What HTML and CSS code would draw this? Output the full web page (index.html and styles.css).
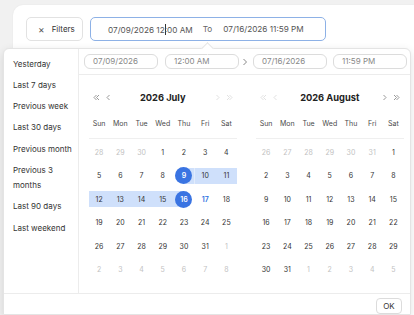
FILE: index.html
```html
<!DOCTYPE html>
<html lang="en">
<head>
<meta charset="UTF-8">
<meta name="viewport" content="width=device-width, initial-scale=1.0">
<link rel="stylesheet" href="styles.css">
<title>Date range</title>
</head>
<body>
<div class="card">
    <div class="toolbar">
        <button class="filters-btn" type="button"><span class="x">&times;</span>Filters</button>
        <div class="range-input">
            <span class="val">07/09/2026 12<span class="caret"></span>:00 AM</span>
            <span class="to">To</span>
            <span class="val">07/16/2026 11:59 PM</span>
        </div>
    </div>
</div>

<div class="popup">
    <div class="popup-body">
        <ul class="presets">
            <li>Yesterday</li>
            <li>Last 7 days</li>
            <li>Previous week</li>
            <li>Last 30 days</li>
            <li>Previous month</li>
            <li>Previous 3 months</li>
            <li>Last 90 days</li>
            <li>Last weekend</li>
        </ul>
        <div class="panels">
            <div class="inputs">
                <div class="field">07/09/2026</div>
                <div class="field">12:00 AM</div>
                <svg class="sep" width="14" height="8" viewBox="0 0 14 8"><path d="M4.5 1 L7.5 4 L4.5 7" fill="none" stroke="#888" stroke-width="1"/></svg>
                <div class="field">07/16/2026</div>
                <div class="field">11:59 PM</div>
            </div>
            <div class="calendars">
                <div class="cal" id="cal-left"></div>
                <div class="cal" id="cal-right"></div>
            </div>
        </div>
    </div>
    <div class="popup-foot">
        <button class="ok-btn" type="button">OK</button>
    </div>
</div>

<script>
    const weekdays = ['Sun', 'Mon', 'Tue', 'Wed', 'Thu', 'Fri', 'Sat'];
    const dbl = '<svg width="7" height="7" viewBox="0 0 7 7"><path d="M3.5 1 L1 3.5 L3.5 6 M6 1 L3.5 3.5 L6 6" fill="none" stroke="currentColor" stroke-width="1"/></svg>';
    const one = '<svg width="7" height="7" viewBox="0 0 7 7"><path d="M4.5 1 L2 3.5 L4.5 6" fill="none" stroke="currentColor" stroke-width="1"/></svg>';

    function buildCalendar(el, title, year, month, leftNav, rightNav) {
        let html = '<div class="cal-head">';
        html += '<span class="nav outer ' + (leftNav ? '' : 'off') + '">' + dbl + '</span>';
        html += '<span class="nav inner ' + (leftNav ? '' : 'off') + '">' + one + '</span>';
        html += '<span class="title">' + title + '</span>';
        html += '<span class="nav inner flip ' + (rightNav ? '' : 'off') + '">' + one + '</span>';
        html += '<span class="nav outer flip ' + (rightNav ? '' : 'off') + '">' + dbl + '</span>';
        html += '</div><div class="grid">';
        weekdays.forEach(function (w) { html += '<div class="wd">' + w + '</div>'; });

        const first = new Date(year, month, 1).getDay();
        const start = new Date(year, month, 1 - first);
        for (let i = 0; i < 42; i++) {
            const d = new Date(start.getFullYear(), start.getMonth(), start.getDate() + i);
            const inMonth = d.getMonth() === month;
            let cls = 'day';
            if (!inMonth) cls += ' muted';
            if (inMonth && month === 6) {
                const n = d.getDate();
                if (n === 9) cls += ' start';
                else if (n === 16) cls += ' end';
                else if (n > 9 && n < 16) cls += ' range';
                else if (n === 17) cls += ' today';
            }
            html += '<div class="' + cls + '"><span>' + d.getDate() + '</span></div>';
        }
        html += '</div>';
        el.innerHTML = html;
    }

    buildCalendar(document.getElementById('cal-left'), '2026 July', 2026, 6, true, false);
    buildCalendar(document.getElementById('cal-right'), '2026 August', 2026, 7, false, true);
</script>
</body>
</html>
```

FILE: styles.css
```css
* {
    box-sizing: border-box;
}

body {
    margin: 0;
    width: 414px;
    height: 315px;
    overflow: hidden;
    position: relative;
    background-color: #f1f1f1;
    font-family: Inter, "Noto Sans", sans-serif;
    color: #333;
}

.card {
    margin: 5px 0 0 13px;
    height: 310px;
    padding: 12px 0 0 13px;
    background-color: #fff;
    border-radius: 10px 0 0 0;
    box-shadow: 0 0 2px rgba(0, 0, 0, 0.06);
}

.toolbar {
    display: flex;
    gap: 7px;
}

.filters-btn {
    display: flex;
    align-items: center;
    gap: 7px;
    width: 57px;
    height: 24px;
    padding: 0 0 0 11px;
    border: 1px solid #e2e2e2;
    border-radius: 5px;
    background-color: #fff;
    font-family: Inter, sans-serif;
    font-size: 8px;
    color: #333;
}

.filters-btn .x {
    font-size: 10px;
    color: #555;
}

.range-input {
    display: flex;
    align-items: center;
    width: 236px;
    height: 24px;
    padding-left: 17px;
    border: 1px solid #8db1e6;
    border-radius: 5px;
    font-size: 8.2px;
    color: #555;
}

.range-input .to {
    margin: 0 11px 0 10px;
    color: #666;
}

.caret {
    display: inline-block;
    width: 0;
    height: 11px;
    border-left: 1px solid #333;
    vertical-align: -2px;
    margin-right: -1px;
}

/* dropdown */

.popup {
    position: absolute;
    left: 3px;
    top: 48px;
    width: 408px;
    height: 267px;
    display: flex;
    flex-direction: column;
    background-color: #fff;
    border: 1px solid #e4e4e4;
    border-radius: 6px 6px 0 0;
    box-shadow: 0 3px 10px rgba(0, 0, 0, 0.12);
}

.popup::before {
    content: "";
    position: absolute;
    left: 199px;
    top: -5px;
    width: 8px;
    height: 8px;
    background-color: #fff;
    border-left: 1px solid #e4e4e4;
    border-top: 1px solid #e4e4e4;
    transform: rotate(45deg);
}

.popup-body {
    display: flex;
    height: 244px;
}

.presets {
    flex-shrink: 0;
    width: 75px;
    margin: 0;
    padding: 4.5px 4px 0 9px;
    list-style: none;
    border-right: 1px solid #ececec;
    font-size: 8px;
    color: #333;
}

.presets li {
    padding: 3.15px 0;
    line-height: 15px;
}

.panels {
    flex: 1;
    min-width: 0;
}

.inputs {
    display: flex;
    align-items: center;
    height: 26px;
    padding: 0 0 0 5px;
    border-bottom: 1px solid #ececec;
}

.field {
    flex-shrink: 0;
    width: 74px;
    height: 15px;
    margin-right: 7px;
    padding-left: 8px;
    border: 1px solid #dcdcdc;
    border-radius: 6px;
    font-size: 8px;
    line-height: 13px;
    color: #888;
}

.field:nth-of-type(2),
.field:nth-of-type(4) {
    margin-right: 0;
}

.field:nth-of-type(3) {
    margin-right: 6px;
}

.sep {
    flex-shrink: 0;
}

.calendars {
    display: flex;
    gap: 18.5px;
    padding: 10px 0 0 9.5px;
}

.cal {
    flex-shrink: 0;
    width: 148.5px;
}

.cal-head {
    display: flex;
    align-items: center;
    height: 24px;
}

.nav {
    display: flex;
    justify-content: center;
    color: #999;
}

.nav.outer {
    width: 15px;
}

.nav.inner {
    width: 9px;
}

.nav.flip svg {
    transform: scaleX(-1);
}

.nav.off {
    color: #e2e2e2;
}

.title {
    flex: 1;
    text-align: center;
    font-size: 9.3px;
    font-weight: 700;
    color: #222;
}

.grid {
    display: grid;
    grid-template-columns: repeat(7, 1fr);
    grid-template-rows: 31.5px;
    grid-auto-rows: 23.5px;
}

.wd {
    height: 30px;
    line-height: 29px;
    text-align: center;
    font-size: 7px;
    color: #4a4a4a;
    border-bottom: 1px solid #efefef;
}

.day {
    display: flex;
    align-items: center;
    justify-content: center;
    font-size: 7px;
    color: #333;
}

.day span {
    display: flex;
    align-items: center;
    justify-content: center;
    width: 100%;
    height: 16px;
}

.day.muted {
    color: #c2c2c2;
}

.day.today {
    color: #2f6fe0;
    font-weight: 600;
}

.day.range span {
    background-color: #cfe0fb;
}

.day.start {
    background: linear-gradient(to right, transparent 50%, #cfe0fb 50%) center / 100% 16px no-repeat;
}

.day.end {
    background: linear-gradient(to right, #cfe0fb 50%, transparent 50%) center / 100% 16px no-repeat;
}

.day.start span,
.day.end span {
    width: 17px;
    height: 17px;
    border-radius: 50%;
    background-color: #3a74e2;
    color: #fff;
    font-weight: 600;
}

.popup-foot {
    display: flex;
    justify-content: flex-end;
    padding: 4px 8px 0 0;
    border-top: 1px solid #ececec;
}

.ok-btn {
    width: 26px;
    height: 16px;
    padding: 0;
    border: 1px solid #dcdcdc;
    border-radius: 4px;
    background-color: #fff;
    font-family: Inter, sans-serif;
    font-size: 8px;
    color: #333;
}
```
